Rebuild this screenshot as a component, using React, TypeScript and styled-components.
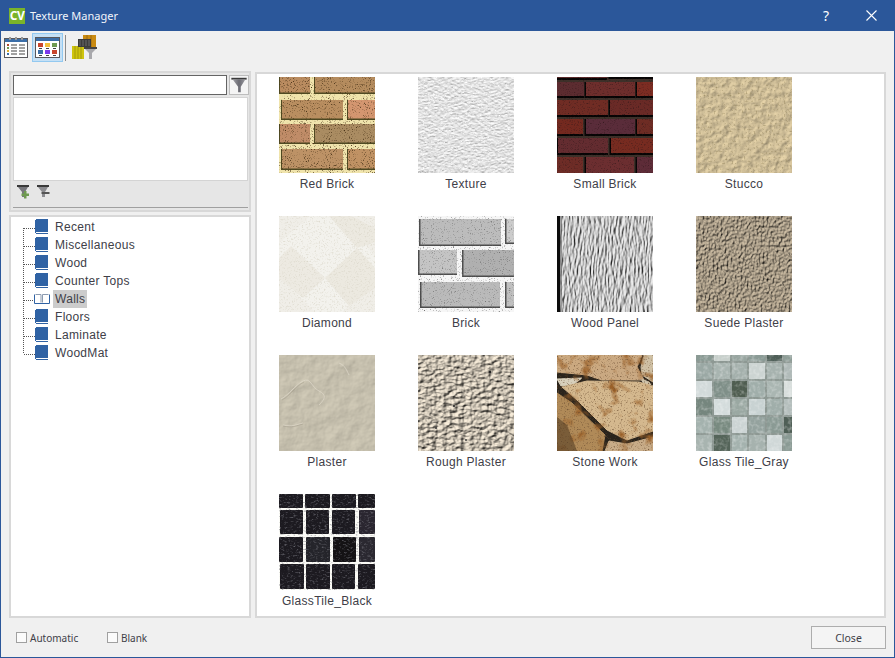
import React from 'react';
import styled, { createGlobalStyle } from 'styled-components';

const GlobalStyle = createGlobalStyle`
  html, body {
    margin: 0;
    padding: 0;
    background: #f0f0f0;
  }
`;

// ---- texture drawing helpers ----

type ReliefProps = {
  id: string;
  freq: string;
  octaves: number;
  seed: number;
  color: string;
  scale: number;
  elevation?: number;
  azimuth?: number;
  constant?: number;
};

function Relief({ id, freq, octaves, seed, color, scale, elevation = 55, azimuth = 225, constant = 1.2 }: ReliefProps) {
  return (
    <>
      <filter id={id} x="0" y="0" width="100%" height="100%" colorInterpolationFilters="sRGB">
        <feTurbulence type="fractalNoise" baseFrequency={freq} numOctaves={octaves} seed={seed} />
        <feDiffuseLighting lightingColor={color} surfaceScale={scale} diffuseConstant={constant}>
          <feDistantLight azimuth={azimuth} elevation={elevation} />
        </feDiffuseLighting>
      </filter>
      <rect width="96" height="96" filter={`url(#${id})`} />
    </>
  );
}

function Speckle({ id, freq, seed, color, gain = 3, cut = 1.8 }: { id: string; freq: string; seed: number; color: string; gain?: number; cut?: number }) {
  const hex = color.replace('#', '');
  const [r, g, b] = [0, 2, 4].map((i) => parseInt(hex.slice(i, i + 2), 16) / 255);
  return (
    <>
      <filter id={id} x="0" y="0" width="100%" height="100%" colorInterpolationFilters="sRGB">
        <feTurbulence type="fractalNoise" baseFrequency={freq} numOctaves={3} seed={seed} />
        <feColorMatrix type="matrix" values={`0 0 0 0 ${r} 0 0 0 0 ${g} 0 0 0 0 ${b} ${gain} 0 0 0 ${-cut}`} />
      </filter>
      <rect width="96" height="96" filter={`url(#${id})`} />
    </>
  );
}

type BrickRect = [number, number, number, number, string?];

const redBricks: BrickRect[] = [
  [0, 0, 31, 17], [35, 0, 61, 17, '#b58c5e'],
  [2, 23, 62, 20, '#b98e60'], [68, 23, 28, 20, '#d49670'],
  [0, 47, 31, 20, '#c08c68'], [35, 47, 61, 20, '#aa8c62'],
  [2, 72, 62, 21, '#bd9266'], [68, 72, 28, 21, '#c09264'],
];

const smallBricks: BrickRect[] = [
  [0, -4, 50, 5, '#5c2a2a'], [53, -4, 43, 4, '#5c2a30'],
  [0, 5, 27, 14, '#5c2c30'], [29, 5, 49, 14, '#6e2e2c'], [80, 5, 16, 14, '#7c2c22'],
  [0, 23, 51, 15, '#702c24'], [53, 23, 43, 15, '#6a2a26'],
  [0, 42, 26, 15, '#74291f'], [29, 42, 49, 15, '#5a2c3a'], [80, 42, 16, 15, '#6e2c24'],
  [1, 61, 50, 15, '#642c30'], [54, 61, 42, 15, '#772b20'],
  [0, 80, 26, 16, '#6e2c26'], [29, 80, 48, 16, '#6c2e30'], [80, 80, 16, 16, '#5e2c38'],
];

const greyBricks: BrickRect[] = [
  [1, 3, 82, 27, '#bcbcbc'], [87, 3, 9, 25, '#cccccc'],
  [0, 34, 39, 25, '#c4c4c4'], [44, 34, 52, 27, '#b0b0b0'],
  [2, 66, 80, 26, '#bababa'], [87, 66, 9, 26, '#c0c0c0'],
];

const grayTiles = [
  ['#8a9a94', '#c8d0cc', '#98a5a0', '#8b9b96', '#4f5f58', '#8f9e98'],
  ['#9aa8a4', '#a8b4b0', '#a4b0ac', '#ccd4d2', '#a6b2ae', '#b0bab8'],
  ['#d2dada', '#7f8f88', '#4f5d50', '#a0aeaa', '#aab6b2', '#d8dedc'],
  ['#75867e', '#d4dcdc', '#9aa8a2', '#c8d2d2', '#a0aeaa', '#b4bebc'],
  ['#a4b2ae', '#788a80', '#ccd4d4', '#94a29e', '#8a9a94', '#4f5f56'],
  ['#a8b4b0', '#55655a', '#a4b2ae', '#a6b2ae', '#d0d8d8', '#8a9a94'],
];
const tileRows = [[-10, 16], [8, 16], [26, 16], [44, 16], [62, 16], [80, 16]];
const tileCols = [[0, 16], [18, 16], [36, 15], [53, 16], [71, 15], [88, 10]];

const blackTiles: BrickRect[] = [
  [0, 0, 24, 14], [26, 0, 25, 14], [53, 0, 24, 14], [79, 0, 17, 14],
  [1, 16, 23, 24], [27, 16, 23, 24], [53, 16, 23, 24], [80, 16, 16, 24, '#2a2630'],
  [0, 43, 24, 25], [27, 43, 24, 25, '#24242a'], [54, 43, 23, 25, '#141214'], [80, 43, 16, 25, '#2a2830'],
  [1, 70, 24, 25], [27, 70, 24, 25], [53, 70, 23, 25], [79, 70, 17, 25],
];

const stones: { points: string; fill: string }[] = [
  { points: '0,0 56,0 44,14 30,20 0,17', fill: '#cba980' },
  { points: '56,0 85,0 80,12 87,25 45,25 30,20 44,14', fill: '#caa982' },
  { points: '87,0 96,0 96,27 85,20 84,12', fill: '#cfc0a4' },
  { points: '0,24 25,23 17,29 4,31', fill: '#d8d0bc' },
  { points: '84,24 92,27 96,33 88,31', fill: '#cfc4ac' },
  { points: '5,32 30,26 82,27 96,31 96,76 70,85 50,75 20,45', fill: '#d4b88e' },
  { points: '0,38 15,48 48,80 45,96 0,96', fill: '#b08a58' },
  { points: '52,86 70,89 96,82 96,96 48,96', fill: '#c8ac88' },
];

function Texture({ kind }: { kind: string }) {
  let body: React.ReactNode = null;

  if (kind === 'redBrick') {
    body = (
      <>
        <rect width="96" height="96" fill="#f0e4ac" />
        {redBricks.map(([x, y, w, h, c], i) => (
          <g key={i}>
            <rect x={x} y={y} width={w} height={h} fill="#4f4a22" />
            <rect x={x + 1} y={y} width={w - 1} height={h - 1.5} fill={c || '#ba8c60'} />
          </g>
        ))}
        <Speckle id="rb1" freq="0.95" seed={4} color="#4a3418" gain={3.5} cut={2} />
      </>
    );
  } else if (kind === 'texture') {
    body = (
      <>
        <Relief id="tx1" freq="0.3 1.4" octaves={3} seed={3} color="#e4e4e4" scale={0.8} elevation={60} azimuth={270} constant={1.13} />
        <Speckle id="tx2" freq="0.4 1.6" seed={10} color="#ffffff" gain={3} cut={1.6} />
      </>
    );
  } else if (kind === 'smallBrick') {
    body = (
      <>
        <rect width="96" height="96" fill="#3d3029" />
        {smallBricks.map(([x, y, w, h, c], i) => (
          <g key={i}>
            <rect x={x - 1.5} y={y} width={w + 1.5} height={h + 2} fill="#060404" />
            <rect x={x} y={y} width={w} height={h} fill={c} />
          </g>
        ))}
        <Speckle id="sb1" freq="0.8" seed={8} color="#2a1416" gain={2} cut={1.1} />
      </>
    );
  } else if (kind === 'stucco') {
    body = (
      <>
        <Relief id="st1" freq="0.16" octaves={6} seed={11} color="#cfbe98" scale={1.1} elevation={62} constant={1.13} />
        <Speckle id="st2" freq="0.5" seed={31} color="#8f8058" gain={2.5} cut={1.45} />
      </>
    );
  } else if (kind === 'diamond') {
    body = (
      <>
        <rect width="96" height="96" fill="#f0eee8" />
        <polygon points="0,27 31,0 62,0 96,40 96,60 64,96 36,96 0,60" fill="#f3f2ed" />
        <polygon points="46,62 78,32 96,52 96,72 70,90" fill="#ecE9e0" />
        <polygon points="0,42 12,30 46,62 24,82 0,62" fill="#edeae2" />
        <polygon points="50,0 72,0 96,12 96,26 78,32" fill="#ece9e0" />
        <Speckle id="dm1" freq="0.6" seed={5} color="#d8d4c6" gain={2.2} cut={1.15} />
      </>
    );
  } else if (kind === 'brick') {
    body = (
      <>
        <rect width="96" height="96" fill="#f6f6f6" />
        {greyBricks.map(([x, y, w, h, c], i) => (
          <g key={i}>
            <rect x={x} y={y} width={w} height={h} fill="#4c4c4c" />
            <rect x={x + 1.5} y={y} width={w - 1.5} height={h - 1.5} fill={c} />
          </g>
        ))}
        <Speckle id="bk1" freq="0.9" seed={14} color="#707070" gain={3} cut={1.75} />
      </>
    );
  } else if (kind === 'woodPanel') {
    body = (
      <>
        <Relief id="wd1" freq="0.75 0.1" octaves={4} seed={6} color="#c8c8c8" scale={2} elevation={55} azimuth={200} />
        <rect width="3" height="96" fill="#0c0c0c" />
        <rect x="3" width="2" height="96" fill="#555" opacity="0.5" />
      </>
    );
  } else if (kind === 'suede') {
    body = <Relief id="su1" freq="0.5 0.36" octaves={3} seed={9} color="#ab9e89" scale={2.2} elevation={55} />;
  } else if (kind === 'plaster') {
    body = (
      <>
        <Relief id="pl1" freq="0.06" octaves={6} seed={17} color="#c6c0ae" scale={1} elevation={65} constant={1.1} />
        <path d="M2 44c8-4 14-14 22-18s8 6 16 10 6 8 0 14M24 68c-8 2-10 4-20 2M60 8c6 2 8 8 10 12" stroke="#e2ddce" fill="none" strokeWidth="0.8" opacity="0.8" />
        <path d="M3 45c8-4 14-14 22-18M24 69c-8 2-10 4-20 2" stroke="#9c9684" fill="none" strokeWidth="0.6" opacity="0.7" />
      </>
    );
  } else if (kind === 'roughPlaster') {
    body = (
      <>
        <Relief id="rp1" freq="0.18 0.3" octaves={4} seed={23} color="#c6bdae" scale={2.4} elevation={52} constant={1.27} />
        <circle cx="72" cy="17" r="1.2" fill="#222" />
        <circle cx="36" cy="51" r="1" fill="#222" />
        <circle cx="18" cy="73" r="1" fill="#333" />
        <circle cx="48" cy="85" r="0.9" fill="#333" />
      </>
    );
  } else if (kind === 'stoneWork') {
    body = (
      <>
        <rect width="96" height="96" fill="#2a241c" />
        {stones.map((s, i) => (
          <polygon key={i} points={s.points} fill={s.fill} stroke={s.fill} strokeWidth="1" />
        ))}
        <Speckle id="sw1" freq="0.08" seed={12} color="#9a6028" gain={3} cut={1.6} />
        <Speckle id="sw2" freq="0.7" seed={3} color="#6a4c30" gain={2.5} cut={1.4} />
        <polygon points="0,62 10,70 20,96 0,96" fill="#4e3820" opacity="0.55" />
      </>
    );
  } else if (kind === 'glassGray') {
    body = (
      <>
        <rect width="96" height="96" fill="#8d9893" />
        {grayTiles.map((row, r) =>
          row.map((c, i) => (
            <rect key={`${r}-${i}`} x={tileCols[i][0]} y={tileRows[r][0]} width={tileCols[i][1]} height={tileRows[r][1]} fill={c} />
          )),
        )}
        <Speckle id="gg1" freq="0.25" seed={19} color="#ffffff" gain={0.8} cut={0.35} />
      </>
    );
  } else if (kind === 'glassBlack') {
    body = (
      <>
        <rect width="96" height="96" fill="#fbfbf6" />
        {blackTiles.map(([x, y, w, h, c], i) => (
          <rect key={i} x={x} y={y} width={w} height={h} rx="1" fill={c || '#1c1a20'} />
        ))}
        <Speckle id="gb1" freq="0.35 0.6" seed={15} color="#77777f" gain={2} cut={1.05} />
      </>
    );
  }

  return (
    <Swatch viewBox="0 0 96 96" width="96" height="96">
      {body}
    </Swatch>
  );
}

// ---- icons ----

function Funnel() {
  return (
    <svg width="20" height="20" viewBox="0 0 20 20">
      <defs>
        <linearGradient id="fn20" x1="0" x2="1" y1="0" y2="0">
          <stop offset="0" stopColor="#a0a0a6" />
          <stop offset="0.5" stopColor="#6a6a72" />
          <stop offset="1" stopColor="#9a9aa0" />
        </linearGradient>
      </defs>
      <rect x="1.5" y="2" width="17" height="2" fill="#3a3a3a" />
      <path d="M3 4h14l-5 8v6h-3v-6z" fill="url(#fn20)" />
    </svg>
  );
}

function FunnelAdd() {
  return (
    <svg width="14" height="14" viewBox="0 0 14 14">
      <rect x="1" y="0" width="12" height="2" fill="#3a3a3a" />
      <path d="M2 2h10l-3 5v5H6V7z" fill="#77777c" />
      <path d="M8 6h2.5v2.5H13V11h-2.5v2.5H8V11H5.5V8.5H8z" fill="#6f9a50" />
    </svg>
  );
}

function FunnelRemove() {
  return (
    <svg width="14" height="14" viewBox="0 0 14 14">
      <rect x="1" y="0" width="12" height="2" fill="#3a3a3a" />
      <path d="M2 2h10l-3 5v5H6V7z" fill="#8c8c90" />
      <rect x="5.5" y="7" width="8" height="2" fill="#555" />
    </svg>
  );
}

function ListIcon() {
  const colors = ['#b04a30', '#6f9a50', '#e0b030', '#3b6ea8'];
  return (
    <svg width="24" height="21" viewBox="0 0 24 21">
      <rect x="0.5" y="1.5" width="23" height="19" fill="#fff" stroke="#58585c" />
      <rect x="1" y="2" width="22" height="3" fill="#3b6ea8" />
      <rect x="5" y="0" width="2" height="3" fill="#9a9a9a" />
      <rect x="11" y="0" width="2" height="3" fill="#9a9a9a" />
      <rect x="17" y="0" width="2" height="3" fill="#9a9a9a" />
      {colors.map((c, i) => (
        <g key={c}>
          <rect x="3" y={7 + i * 3} width="2" height="2" fill={c} />
          <rect x="7" y={7.5 + i * 3} width="6" height="1" fill="#444" />
          <rect x="15" y={7.5 + i * 3} width="6" height="1" fill="#444" />
        </g>
      ))}
    </svg>
  );
}

function GridIcon() {
  const cells = [
    ['#c8462c', '#f2c03a', '#6f9a50'],
    ['#3b6ea8', '#7c3aed', '#c8462c'],
  ];
  return (
    <svg width="25" height="21" viewBox="0 0 25 21">
      <rect x="0.5" y="0.5" width="24" height="20" fill="#fff" stroke="#58585c" />
      <rect x="1" y="1" width="23" height="3" fill="#3b6ea8" />
      {cells.map((row, r) =>
        row.map((c, i) => (
          <g key={`${r}-${i}`}>
            <rect x={3 + i * 7} y={6 + r * 7} width="5" height="4" fill={c} />
            <rect x={4 + i * 7} y={11 + r * 7} width="3" height="1" fill="#444" />
          </g>
        )),
      )}
    </svg>
  );
}

function ManagerIcon() {
  return (
    <svg width="25" height="25" viewBox="0 0 25 25">
      <rect x="11" y="0" width="13" height="12" fill="#c98a12" />
      <path d="M15 0v12M19 0v12" stroke="#9a6a10" />
      <rect x="0" y="11" width="12" height="13" fill="#cfc40e" />
      <path d="M3 11v13M6 11v13M9 11v13" stroke="#a39a0c" />
      <rect x="6" y="4" width="13" height="8" fill="#3c3c3c" />
      <path d="M7 6h11M7 8h11M7 10h11" stroke="#6a6a6a" strokeDasharray="2 1" />
      <rect x="12" y="12" width="13" height="2" fill="#444" />
      <path d="M13 14h11l-4 4v6h-3v-6z" fill="#a8a8ac" />
    </svg>
  );
}

function ClosedBook() {
  return (
    <svg width="14" height="16" viewBox="0 0 14 16">
      <rect x="1" y="0" width="12" height="13" fill="#2f62a4" />
      <rect x="0" y="1" width="1" height="13" fill="#2f62a4" />
      <rect x="1" y="13" width="12" height="1" fill="#fff" />
      <rect x="1" y="14" width="12" height="1" fill="#2f62a4" />
    </svg>
  );
}

function OpenBook() {
  return (
    <svg width="16" height="16" viewBox="0 0 16 16">
      <path d="M0.5 3.5v9h15v-9" fill="#fff" stroke="#2f62a4" />
      <path d="M1.5 3.5h5.5v8M8.5 11.5v-8h6" fill="none" stroke="#8c9bb0" />
    </svg>
  );
}

function Connector({ first, last }: { first?: boolean; last?: boolean }) {
  return (
    <ConnectorSvg width="12" height="18" viewBox="0 0 12 18">
      <path
        d={`M0.5 ${first ? 10 : 0}V${last ? 10 : 18}M1 10.5H12`}
        fill="none"
        stroke="#555"
        strokeDasharray="1 1"
      />
    </ConnectorSvg>
  );
}

// ---- data ----

const categories = ['Recent', 'Miscellaneous', 'Wood', 'Counter Tops', 'Walls', 'Floors', 'Laminate', 'WoodMat'];

const textures = [
  { name: 'Red Brick', kind: 'redBrick' },
  { name: 'Texture', kind: 'texture' },
  { name: 'Small Brick', kind: 'smallBrick' },
  { name: 'Stucco', kind: 'stucco' },
  { name: 'Diamond', kind: 'diamond' },
  { name: 'Brick', kind: 'brick' },
  { name: 'Wood Panel', kind: 'woodPanel' },
  { name: 'Suede Plaster', kind: 'suede' },
  { name: 'Plaster', kind: 'plaster' },
  { name: 'Rough Plaster', kind: 'roughPlaster' },
  { name: 'Stone Work', kind: 'stoneWork' },
  { name: 'Glass Tile_Gray', kind: 'glassGray' },
  { name: 'GlassTile_Black', kind: 'glassBlack' },
];

export default function App() {
  return (
    <Window>
      <GlobalStyle />
      <TitleBar>
        <Logo>CV</Logo>
        <Title>Texture Manager</Title>
        <Help>?</Help>
        <CloseX width="11" height="11" viewBox="0 0 11 11">
          <path d="M0.5 0.5l10 10M10.5 0.5l-10 10" stroke="#fff" strokeWidth="1.1" fill="none" />
        </CloseX>
      </TitleBar>

      <Toolbar>
        <ToolButton>
          <ListIcon />
        </ToolButton>
        <ToolButton $active>
          <GridIcon />
        </ToolButton>
        <ToolSeparator />
        <ToolButton $wide>
          <ManagerIcon />
        </ToolButton>
      </Toolbar>

      <Main>
        <LeftColumn>
          <FilterPanel>
            <SearchRow>
              <SearchInput />
              <FilterButton>
                <Funnel />
              </FilterButton>
            </SearchRow>
            <FilterList />
            <FilterActions>
              <FunnelAdd />
              <FunnelRemove />
            </FilterActions>
            <PanelRule />
          </FilterPanel>

          <TreePanel>
            {categories.map((name, i) => (
              <TreeRow key={name}>
                <Connector first={i === 0} last={i === categories.length - 1} />
                <BookSlot $open={name === 'Walls'}>{name === 'Walls' ? <OpenBook /> : <ClosedBook />}</BookSlot>
                <TreeLabel $selected={name === 'Walls'}>{name}</TreeLabel>
              </TreeRow>
            ))}
          </TreePanel>
        </LeftColumn>

        <GalleryPanel>
          {textures.map((t) => (
            <Card key={t.name}>
              <Texture kind={t.kind} />
              <CardLabel>{t.name}</CardLabel>
            </Card>
          ))}
        </GalleryPanel>
      </Main>

      <Footer>
        <CheckLabel>
          <CheckBox type="checkbox" />
          Automatic
        </CheckLabel>
        <CheckLabel>
          <CheckBox type="checkbox" />
          Blank
        </CheckLabel>
        <CloseButton>Close</CloseButton>
      </Footer>
    </Window>
  );
}

const Window = styled.div`
  box-sizing: border-box;
  width: 895px;
  height: 658px;
  display: flex;
  flex-direction: column;
  background: #f0f0f0;
  border: 1px solid #2b579a;
  border-top: 0;
  overflow: hidden;
  font-family: 'Liberation Sans', Arial, sans-serif;
  color: #404040;
`;

const TitleBar = styled.div`
  flex: none;
  height: 31px;
  display: flex;
  align-items: center;
  background: #2b579a;
  padding: 0 17px 0 8px;
  color: #fff;
`;

const Logo = styled.div`
  width: 16px;
  height: 16px;
  display: flex;
  align-items: center;
  justify-content: center;
  background: #7ab32a;
  font: bold 12px 'Open Sans', sans-serif;
  letter-spacing: -0.5px;
  color: #fff;
`;

const Title = styled.div`
  flex: 1;
  margin-left: 5px;
  font: 11px 'Noto Sans', sans-serif;
  color: #f2f5fa;
`;

const Help = styled.div`
  margin-right: 37px;
  font: 14px 'Noto Sans', sans-serif;
  color: #fff;
`;

const CloseX = styled.svg`
  display: block;
`;

const Toolbar = styled.div`
  flex: none;
  height: 40px;
  display: flex;
  align-items: center;
  gap: 1px;
  padding: 0 0 7px;
  box-sizing: border-box;
`;

const ToolButton = styled.div<{ $active?: boolean; $wide?: boolean }>`
  box-sizing: border-box;
  width: ${(p) => (p.$active ? 31 : p.$wide ? 32 : 30)}px;
  height: 29px;
  display: flex;
  align-items: center;
  justify-content: center;
  background: ${(p) => (p.$active ? '#c5e0f5' : 'transparent')};
  border: 1px solid ${(p) => (p.$active ? '#93c9f0' : 'transparent')};
`;

const ToolSeparator = styled.div`
  width: 1px;
  height: 26px;
  margin: 0 1px;
  background: #8c8c8c;
`;

const Main = styled.div`
  flex: none;
  height: 547px;
  display: flex;
  align-items: flex-end;
  gap: 4px;
  padding: 0 8px;
`;

const LeftColumn = styled.div`
  flex: none;
  width: 242px;
  height: 547px;
  display: flex;
  flex-direction: column;
  gap: 3px;
`;

const FilterPanel = styled.div`
  box-sizing: border-box;
  flex: none;
  height: 141px;
  padding: 2px 0 2px 2px;
  background: #e6e6e6;
  border: 2px solid #d8d8d8;
  display: flex;
  flex-direction: column;
`;

const SearchRow = styled.div`
  display: flex;
  gap: 2px;
  height: 20px;
`;

const SearchInput = styled.input`
  box-sizing: border-box;
  flex: none;
  width: 214px;
  height: 20px;
  margin: 0;
  padding: 0 2px;
  border: 1px solid #646464;
  background: #fff;
  outline: none;
`;

const FilterButton = styled.div`
  box-sizing: border-box;
  flex: none;
  width: 20px;
  height: 20px;
  display: flex;
  align-items: center;
  justify-content: center;
  background: #f4f4f4;
  border: 1px solid #bdbdbd;
`;

const FilterList = styled.div`
  box-sizing: border-box;
  width: 235px;
  height: 85px;
  margin-top: 2px;
  background: #fff;
  border: 1px solid #d4d4d4;
`;

const FilterActions = styled.div`
  display: flex;
  gap: 6px;
  padding: 4px 0 0 3px;
  height: 14px;
`;

const PanelRule = styled.div`
  height: 1px;
  margin-top: 8px;
  width: 235px;
  background: #a0a0a0;
`;

const TreePanel = styled.div`
  box-sizing: border-box;
  flex: 1;
  padding: 1px 0 0 12px;
  background: #fff;
  border: 2px solid #d8d8d8;
`;

const TreeRow = styled.div`
  height: 18px;
  display: flex;
  align-items: center;
`;

const ConnectorSvg = styled.svg`
  display: block;
  flex: none;
`;

const BookSlot = styled.div<{ $open?: boolean }>`
  flex: none;
  width: ${(p) => (p.$open ? 19 : 18)}px;
  height: 16px;
  margin-left: ${(p) => (p.$open ? -1 : 0)}px;
`;

const TreeLabel = styled.div<{ $selected?: boolean }>`
  height: 18px;
  line-height: 18px;
  padding: 0 2px;
  font-size: 12px;
  letter-spacing: 0.3px;
  color: #404048;
  background: ${(p) => (p.$selected ? '#cccccc' : 'transparent')};
`;

const GalleryPanel = styled.div`
  box-sizing: border-box;
  flex: 1;
  height: 546px;
  padding: 3px 0 0 22px;
  background: #fff;
  border: 2px solid #d8d8d8;
  display: grid;
  grid-template-columns: repeat(4, 96px);
  grid-auto-rows: 114px;
  column-gap: 43px;
  row-gap: 25px;
  align-content: start;
`;

const Card = styled.div`
  width: 96px;
  display: flex;
  flex-direction: column;
  align-items: center;
`;

const Swatch = styled.svg`
  display: block;
  flex: none;
`;

const CardLabel = styled.div`
  margin-top: 4px;
  height: 14px;
  line-height: 14px;
  font-size: 12px;
  letter-spacing: 0.3px;
  white-space: nowrap;
  color: #404048;
`;

const Footer = styled.div`
  flex: 1;
  display: flex;
  align-items: center;
  padding: 0 8px 0 15px;
`;

const CheckLabel = styled.label`
  display: flex;
  align-items: center;
  width: 91px;
  font: 10px 'Noto Sans', sans-serif;
  color: #404048;
`;

const CheckBox = styled.input`
  appearance: none;
  box-sizing: border-box;
  width: 11px;
  height: 11px;
  margin: 0 3px 0 0;
  background: #fbfbfb;
  border: 1px solid #a0a0a0;
`;

const CloseButton = styled.button`
  box-sizing: border-box;
  margin-left: auto;
  width: 75px;
  height: 23px;
  padding: 0;
  background: #f4f4f4;
  border: 1px solid #adadad;
  font: 10.5px 'Noto Sans', sans-serif;
  color: #404048;
`;
